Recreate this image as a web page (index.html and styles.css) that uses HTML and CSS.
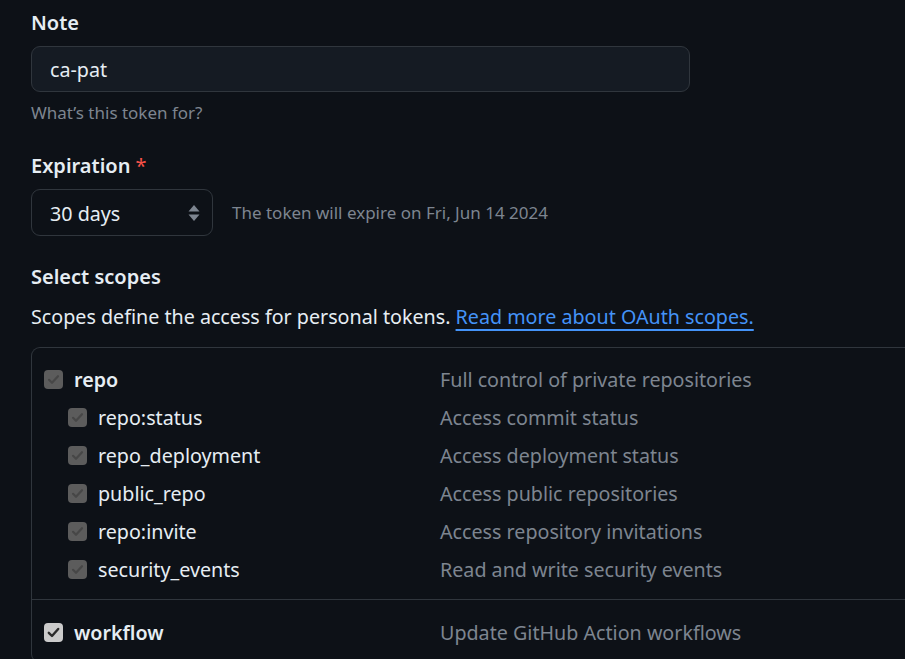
FILE: index.html
```html
<!DOCTYPE html>
<html lang="en">
<head>
<meta charset="utf-8">
<title>New personal access token</title>
<link rel="stylesheet" href="styles.css">
</head>
<body>
<main class="page">
  <div class="field">
    <label class="label" for="note">Note</label>
    <div class="input">ca-pat</div>
    <p class="hint">What’s this token for?</p>
  </div>

  <div class="field expiration">
    <div class="label">Expiration <span class="req">*</span></div>
    <div class="exp-row">
      <div class="select">
        <span>30 days</span>
        <svg class="arrows" width="12" height="18" viewBox="0 0 12 18"><path d="M6 1 L11.5 7.5 H0.5 Z" fill="#7d8590"/><path d="M6 17 L11.5 10.5 H0.5 Z" fill="#7d8590"/></svg>
      </div>
      <span class="exp-note">The token will expire on Fri, Jun 14 2024</span>
    </div>
  </div>

  <div class="field scopes">
    <div class="label">Select scopes</div>
    <p class="desc">Scopes define the access for personal tokens. <a class="link" href="#">Read more about OAuth scopes.</a></p>
  </div>

  <div class="box">
    <div class="group">
      <div class="row parent">
        <div class="name"><span class="cb dis"><svg viewBox="0 0 19 19"><path d="M5 9.8 L8 12.8 L14 6.2" stroke="#474747" stroke-width="2.2" fill="none" stroke-linecap="round" stroke-linejoin="round"/></svg></span><strong>repo</strong></div>
        <div class="info">Full control of private repositories</div>
      </div>
      <div class="row child">
        <div class="name"><span class="cb dis"><svg viewBox="0 0 19 19"><path d="M5 9.8 L8 12.8 L14 6.2" stroke="#474747" stroke-width="2.2" fill="none" stroke-linecap="round" stroke-linejoin="round"/></svg></span>repo:status</div>
        <div class="info">Access commit status</div>
      </div>
      <div class="row child">
        <div class="name"><span class="cb dis"><svg viewBox="0 0 19 19"><path d="M5 9.8 L8 12.8 L14 6.2" stroke="#474747" stroke-width="2.2" fill="none" stroke-linecap="round" stroke-linejoin="round"/></svg></span>repo_deployment</div>
        <div class="info">Access deployment status</div>
      </div>
      <div class="row child">
        <div class="name"><span class="cb dis"><svg viewBox="0 0 19 19"><path d="M5 9.8 L8 12.8 L14 6.2" stroke="#474747" stroke-width="2.2" fill="none" stroke-linecap="round" stroke-linejoin="round"/></svg></span>public_repo</div>
        <div class="info">Access public repositories</div>
      </div>
      <div class="row child">
        <div class="name"><span class="cb dis"><svg viewBox="0 0 19 19"><path d="M5 9.8 L8 12.8 L14 6.2" stroke="#474747" stroke-width="2.2" fill="none" stroke-linecap="round" stroke-linejoin="round"/></svg></span>repo:invite</div>
        <div class="info">Access repository invitations</div>
      </div>
      <div class="row child">
        <div class="name"><span class="cb dis"><svg viewBox="0 0 19 19"><path d="M5 9.8 L8 12.8 L14 6.2" stroke="#474747" stroke-width="2.2" fill="none" stroke-linecap="round" stroke-linejoin="round"/></svg></span>security_events</div>
        <div class="info">Read and write security events</div>
      </div>
    </div>
    <div class="group second">
      <div class="row parent">
        <div class="name"><span class="cb on"><svg viewBox="0 0 19 19"><path d="M4.8 9.8 L8 13 L14.2 6" stroke="#2b2b2b" stroke-width="2.4" fill="none" stroke-linecap="round" stroke-linejoin="round"/></svg></span><strong>workflow</strong></div>
        <div class="info">Update GitHub Action workflows</div>
      </div>
    </div>
  </div>
</main>
</body>
</html>
```
FILE: styles.css
```css
html, body {
  margin: 0;
  padding: 0;
  background: #0d1117;
  overflow: hidden;
}
body {
  font-family: "Noto Sans", "Open Sans", "Liberation Sans", sans-serif;
  color: #e6edf3;
  font-size: 19.7px;
}
.page {
  padding: 7px 0 0 31px;
}
.field { margin: 0; }
.label {
  display: block;
  font-weight: 600;
  line-height: 30px;
  font-size: 20px;
  padding-top: 1px;
  margin-bottom: 8px;
}
.req { color: #f85149; font-weight: 400; }
.input {
  box-sizing: border-box;
  width: 659px;
  height: 46px;
  border: 1px solid #30363d;
  border-radius: 9px;
  background: #151b23;
  padding: 1px 18px 0;
  line-height: 44px;
  font-size: 19.7px;
}
.hint {
  margin: 9px 0 0;
  color: #7d8590;
  font-size: 17px;
  line-height: 24px;
}
.expiration { margin-top: 25px; }
.exp-row {
  display: flex;
  align-items: center;
  gap: 19px;
}
.select {
  box-sizing: border-box;
  width: 182px;
  height: 47px;
  border: 1px solid #30363d;
  border-radius: 9px;
  display: flex;
  align-items: center;
  justify-content: space-between;
  padding: 1px 12px 0 18px;
  font-size: 19.7px;
}
.arrows { display: block; }
.exp-note {
  color: #7d8590;
  font-size: 17px;
  line-height: 24px;
}
.scopes { margin-top: 25px; }
.scopes .label { margin-bottom: 10px; }
.desc {
  margin: 0;
  line-height: 30px;
  font-size: 19.7px;
}
.link {
  color: #4493f8;
  text-decoration: underline;
  text-underline-offset: 5px;
  text-decoration-thickness: 2px;
}
.box {
  margin-top: 15px;
  border: 1px solid #30363d;
  border-right: none;
  border-radius: 9px 0 0 9px;
}
.group {
  padding: 12px 12px 11px;
}
.group.second {
  border-top: 1px solid #30363d;
  padding-top: 13px;
}
.row {
  display: flex;
  align-items: center;
  height: 38px;
}
.name {
  display: flex;
  align-items: center;
  width: 396px;
  font-size: 19.7px;
}
.child .name { padding-left: 24px; box-sizing: border-box; }
.name strong { font-weight: 600; }
.cb {
  width: 19px;
  height: 19px;
  border-radius: 4px;
  margin-right: 11px;
  flex: none;
}
.cb svg { display: block; width: 19px; height: 19px; }
.cb.dis { background: #5c5c5c; }
.cb.on { background: #cbcbcb; }
.info {
  color: #7d8590;
  font-size: 19.7px;
  white-space: nowrap;
}
```
